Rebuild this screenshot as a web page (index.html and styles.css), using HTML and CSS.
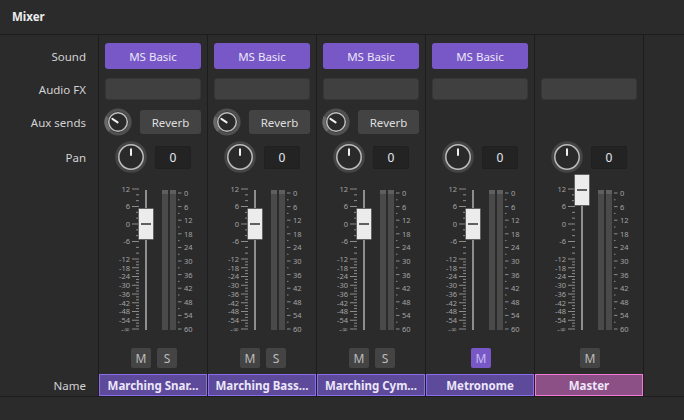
FILE: index.html
```html
<!DOCTYPE html>
<html>
<head>
<meta charset="utf-8">
<link rel="stylesheet" href="styles.css">
</head>
<body>
<div class="app">
  <header class="titlebar">Mixer</header>
  <div class="mixer">
    <div class="col labels">
      <div class="row r-sound">Sound</div>
      <div class="row r-fx">Audio FX</div>
      <div class="row r-aux">Aux sends</div>
      <div class="row r-pan">Pan</div>
      <div class="row r-fader"></div>
      <div class="row r-ms"></div>
      <div class="row r-name">Name</div>
    </div>

    <!-- Strip 1 -->
    <div class="col strip">
      <div class="row r-sound"><div class="btn sound">MS Basic</div></div>
      <div class="row r-fx"><div class="fxbox"></div></div>
      <div class="row r-aux">
        <svg class="knob-s" width="28" height="28" viewBox="0 0 28 28"><circle class="ring" cx="14" cy="14" r="12"/><path class="ring-val" d="M5.5 22.5A12 12 0 0 1 3.1 9"/><circle class="face" cx="14" cy="14" r="9.3"/><path class="ptr" d="M13.6 14.4L8.4 10.9"/></svg>
        <div class="btn aux">Reverb</div>
      </div>
      <div class="row r-pan">
        <svg class="knob-l" width="32" height="32" viewBox="0 0 32 32"><circle class="ring" cx="16" cy="16" r="14"/><circle class="face" cx="16" cy="16" r="12.2"/><path class="ptr" d="M16 8.2V14"/></svg>
        <div class="panval">0</div>
      </div>
      <div class="row r-fader">
        <svg class="fader" width="108" height="162" viewBox="0 0 108 162">
          <path class="tk" d="M33 15h7M33 32.5h7M33 50h7M33 67.5h7M33 85h7M33 93.75h7M33 102.5h7M33 111.25h7M33 120h7M33 128.75h7M33 137.5h7M33 146.25h7M33 155h7M37 20.83h3M37 26.67h3M37 38.33h3M37 44.17h3M37 55.83h3M37 61.67h3M37 73.33h3M37 79.17h3M37 87.92h3M37 90.83h3M37 96.67h3M37 99.58h3M37 105.42h3M37 108.33h3M37 114.17h3M37 117.08h3M37 122.92h3M37 125.83h3M37 131.67h3M37 134.58h3M37 140.42h3M37 143.33h3M37 149.17h3M37 152.08h3M79 19h3.5M79 32.6h3.5M79 46.2h3.5M79 59.8h3.5M79 73.4h3.5M79 87h3.5M79 100.6h3.5M79 114.2h3.5M79 127.8h3.5M79 141.4h3.5M79 155h3.5M79 25.8h1.5M79 39.4h1.5M79 53h1.5M79 66.6h1.5M79 80.2h1.5M79 93.8h1.5M79 107.4h1.5M79 121h1.5M79 134.6h1.5M79 148.2h1.5"/>
          <g class="lbl-l"><text x="31" y="17.9">12</text><text x="31" y="35.4">6</text><text x="31" y="52.9">0</text><text x="31" y="70.4">-6</text><text x="31" y="87.9">-12</text><text x="31" y="96.6">-18</text><text x="31" y="105.4">-24</text><text x="31" y="114.1">-30</text><text x="31" y="122.9">-36</text><text x="31" y="131.6">-42</text><text x="31" y="140.4">-48</text><text x="31" y="149.1">-54</text><text x="31" y="157.9">-∞</text></g>
          <g class="lbl-r"><text x="85" y="21.9">0</text><text x="85" y="35.5">6</text><text x="85" y="49.1">12</text><text x="85" y="62.7">18</text><text x="85" y="76.3">24</text><text x="85" y="89.9">30</text><text x="85" y="103.5">36</text><text x="85" y="117.1">42</text><text x="85" y="130.7">48</text><text x="85" y="144.3">54</text><text x="85" y="157.9">60</text></g>
          <rect class="track" x="46" y="16" width="2" height="140"/>
          <rect class="meter" x="63" y="16" width="6" height="140"/><rect class="meter-top" x="63" y="16" width="6" height="4"/>
          <rect class="meter" x="71" y="16" width="6" height="140"/><rect class="meter-top" x="71" y="16" width="6" height="4"/>
          <rect class="cap" x="39.5" y="34.5" width="15" height="31" rx="1"/><path class="cap-line" d="M42 50h10"/>
        </svg>
      </div>
      <div class="row r-ms"><div class="tog">M</div><div class="tog">S</div></div>
      <div class="row r-name"><div class="name">Marching Snar...</div></div>
    </div>

    <!-- Strip 2 -->
    <div class="col strip">
      <div class="row r-sound"><div class="btn sound">MS Basic</div></div>
      <div class="row r-fx"><div class="fxbox"></div></div>
      <div class="row r-aux">
        <svg class="knob-s" width="28" height="28" viewBox="0 0 28 28"><circle class="ring" cx="14" cy="14" r="12"/><path class="ring-val" d="M5.5 22.5A12 12 0 0 1 3.1 9"/><circle class="face" cx="14" cy="14" r="9.3"/><path class="ptr" d="M13.6 14.4L8.4 10.9"/></svg>
        <div class="btn aux">Reverb</div>
      </div>
      <div class="row r-pan">
        <svg class="knob-l" width="32" height="32" viewBox="0 0 32 32"><circle class="ring" cx="16" cy="16" r="14"/><circle class="face" cx="16" cy="16" r="12.2"/><path class="ptr" d="M16 8.2V14"/></svg>
        <div class="panval">0</div>
      </div>
      <div class="row r-fader">
        <svg class="fader" width="108" height="162" viewBox="0 0 108 162">
          <path class="tk" d="M33 15h7M33 32.5h7M33 50h7M33 67.5h7M33 85h7M33 93.75h7M33 102.5h7M33 111.25h7M33 120h7M33 128.75h7M33 137.5h7M33 146.25h7M33 155h7M37 20.83h3M37 26.67h3M37 38.33h3M37 44.17h3M37 55.83h3M37 61.67h3M37 73.33h3M37 79.17h3M37 87.92h3M37 90.83h3M37 96.67h3M37 99.58h3M37 105.42h3M37 108.33h3M37 114.17h3M37 117.08h3M37 122.92h3M37 125.83h3M37 131.67h3M37 134.58h3M37 140.42h3M37 143.33h3M37 149.17h3M37 152.08h3M79 19h3.5M79 32.6h3.5M79 46.2h3.5M79 59.8h3.5M79 73.4h3.5M79 87h3.5M79 100.6h3.5M79 114.2h3.5M79 127.8h3.5M79 141.4h3.5M79 155h3.5M79 25.8h1.5M79 39.4h1.5M79 53h1.5M79 66.6h1.5M79 80.2h1.5M79 93.8h1.5M79 107.4h1.5M79 121h1.5M79 134.6h1.5M79 148.2h1.5"/>
          <g class="lbl-l"><text x="31" y="17.9">12</text><text x="31" y="35.4">6</text><text x="31" y="52.9">0</text><text x="31" y="70.4">-6</text><text x="31" y="87.9">-12</text><text x="31" y="96.6">-18</text><text x="31" y="105.4">-24</text><text x="31" y="114.1">-30</text><text x="31" y="122.9">-36</text><text x="31" y="131.6">-42</text><text x="31" y="140.4">-48</text><text x="31" y="149.1">-54</text><text x="31" y="157.9">-∞</text></g>
          <g class="lbl-r"><text x="85" y="21.9">0</text><text x="85" y="35.5">6</text><text x="85" y="49.1">12</text><text x="85" y="62.7">18</text><text x="85" y="76.3">24</text><text x="85" y="89.9">30</text><text x="85" y="103.5">36</text><text x="85" y="117.1">42</text><text x="85" y="130.7">48</text><text x="85" y="144.3">54</text><text x="85" y="157.9">60</text></g>
          <rect class="track" x="46" y="16" width="2" height="140"/>
          <rect class="meter" x="63" y="16" width="6" height="140"/><rect class="meter-top" x="63" y="16" width="6" height="4"/>
          <rect class="meter" x="71" y="16" width="6" height="140"/><rect class="meter-top" x="71" y="16" width="6" height="4"/>
          <rect class="cap" x="39.5" y="34.5" width="15" height="31" rx="1"/><path class="cap-line" d="M42 50h10"/>
        </svg>
      </div>
      <div class="row r-ms"><div class="tog">M</div><div class="tog">S</div></div>
      <div class="row r-name"><div class="name">Marching Bass...</div></div>
    </div>

    <!-- Strip 3 -->
    <div class="col strip">
      <div class="row r-sound"><div class="btn sound">MS Basic</div></div>
      <div class="row r-fx"><div class="fxbox"></div></div>
      <div class="row r-aux">
        <svg class="knob-s" width="28" height="28" viewBox="0 0 28 28"><circle class="ring" cx="14" cy="14" r="12"/><path class="ring-val" d="M5.5 22.5A12 12 0 0 1 3.1 9"/><circle class="face" cx="14" cy="14" r="9.3"/><path class="ptr" d="M13.6 14.4L8.4 10.9"/></svg>
        <div class="btn aux">Reverb</div>
      </div>
      <div class="row r-pan">
        <svg class="knob-l" width="32" height="32" viewBox="0 0 32 32"><circle class="ring" cx="16" cy="16" r="14"/><circle class="face" cx="16" cy="16" r="12.2"/><path class="ptr" d="M16 8.2V14"/></svg>
        <div class="panval">0</div>
      </div>
      <div class="row r-fader">
        <svg class="fader" width="108" height="162" viewBox="0 0 108 162">
          <path class="tk" d="M33 15h7M33 32.5h7M33 50h7M33 67.5h7M33 85h7M33 93.75h7M33 102.5h7M33 111.25h7M33 120h7M33 128.75h7M33 137.5h7M33 146.25h7M33 155h7M37 20.83h3M37 26.67h3M37 38.33h3M37 44.17h3M37 55.83h3M37 61.67h3M37 73.33h3M37 79.17h3M37 87.92h3M37 90.83h3M37 96.67h3M37 99.58h3M37 105.42h3M37 108.33h3M37 114.17h3M37 117.08h3M37 122.92h3M37 125.83h3M37 131.67h3M37 134.58h3M37 140.42h3M37 143.33h3M37 149.17h3M37 152.08h3M79 19h3.5M79 32.6h3.5M79 46.2h3.5M79 59.8h3.5M79 73.4h3.5M79 87h3.5M79 100.6h3.5M79 114.2h3.5M79 127.8h3.5M79 141.4h3.5M79 155h3.5M79 25.8h1.5M79 39.4h1.5M79 53h1.5M79 66.6h1.5M79 80.2h1.5M79 93.8h1.5M79 107.4h1.5M79 121h1.5M79 134.6h1.5M79 148.2h1.5"/>
          <g class="lbl-l"><text x="31" y="17.9">12</text><text x="31" y="35.4">6</text><text x="31" y="52.9">0</text><text x="31" y="70.4">-6</text><text x="31" y="87.9">-12</text><text x="31" y="96.6">-18</text><text x="31" y="105.4">-24</text><text x="31" y="114.1">-30</text><text x="31" y="122.9">-36</text><text x="31" y="131.6">-42</text><text x="31" y="140.4">-48</text><text x="31" y="149.1">-54</text><text x="31" y="157.9">-∞</text></g>
          <g class="lbl-r"><text x="85" y="21.9">0</text><text x="85" y="35.5">6</text><text x="85" y="49.1">12</text><text x="85" y="62.7">18</text><text x="85" y="76.3">24</text><text x="85" y="89.9">30</text><text x="85" y="103.5">36</text><text x="85" y="117.1">42</text><text x="85" y="130.7">48</text><text x="85" y="144.3">54</text><text x="85" y="157.9">60</text></g>
          <rect class="track" x="46" y="16" width="2" height="140"/>
          <rect class="meter" x="63" y="16" width="6" height="140"/><rect class="meter-top" x="63" y="16" width="6" height="4"/>
          <rect class="meter" x="71" y="16" width="6" height="140"/><rect class="meter-top" x="71" y="16" width="6" height="4"/>
          <rect class="cap" x="39.5" y="34.5" width="15" height="31" rx="1"/><path class="cap-line" d="M42 50h10"/>
        </svg>
      </div>
      <div class="row r-ms"><div class="tog">M</div><div class="tog">S</div></div>
      <div class="row r-name"><div class="name">Marching Cym...</div></div>
    </div>

    <!-- Strip 4: Metronome -->
    <div class="col strip">
      <div class="row r-sound"><div class="btn sound">MS Basic</div></div>
      <div class="row r-fx"><div class="fxbox"></div></div>
      <div class="row r-aux"></div>
      <div class="row r-pan">
        <svg class="knob-l" width="32" height="32" viewBox="0 0 32 32"><circle class="ring" cx="16" cy="16" r="14"/><circle class="face" cx="16" cy="16" r="12.2"/><path class="ptr" d="M16 8.2V14"/></svg>
        <div class="panval">0</div>
      </div>
      <div class="row r-fader">
        <svg class="fader" width="108" height="162" viewBox="0 0 108 162">
          <path class="tk" d="M33 15h7M33 32.5h7M33 50h7M33 67.5h7M33 85h7M33 93.75h7M33 102.5h7M33 111.25h7M33 120h7M33 128.75h7M33 137.5h7M33 146.25h7M33 155h7M37 20.83h3M37 26.67h3M37 38.33h3M37 44.17h3M37 55.83h3M37 61.67h3M37 73.33h3M37 79.17h3M37 87.92h3M37 90.83h3M37 96.67h3M37 99.58h3M37 105.42h3M37 108.33h3M37 114.17h3M37 117.08h3M37 122.92h3M37 125.83h3M37 131.67h3M37 134.58h3M37 140.42h3M37 143.33h3M37 149.17h3M37 152.08h3M79 19h3.5M79 32.6h3.5M79 46.2h3.5M79 59.8h3.5M79 73.4h3.5M79 87h3.5M79 100.6h3.5M79 114.2h3.5M79 127.8h3.5M79 141.4h3.5M79 155h3.5M79 25.8h1.5M79 39.4h1.5M79 53h1.5M79 66.6h1.5M79 80.2h1.5M79 93.8h1.5M79 107.4h1.5M79 121h1.5M79 134.6h1.5M79 148.2h1.5"/>
          <g class="lbl-l"><text x="31" y="17.9">12</text><text x="31" y="35.4">6</text><text x="31" y="52.9">0</text><text x="31" y="70.4">-6</text><text x="31" y="87.9">-12</text><text x="31" y="96.6">-18</text><text x="31" y="105.4">-24</text><text x="31" y="114.1">-30</text><text x="31" y="122.9">-36</text><text x="31" y="131.6">-42</text><text x="31" y="140.4">-48</text><text x="31" y="149.1">-54</text><text x="31" y="157.9">-∞</text></g>
          <g class="lbl-r"><text x="85" y="21.9">0</text><text x="85" y="35.5">6</text><text x="85" y="49.1">12</text><text x="85" y="62.7">18</text><text x="85" y="76.3">24</text><text x="85" y="89.9">30</text><text x="85" y="103.5">36</text><text x="85" y="117.1">42</text><text x="85" y="130.7">48</text><text x="85" y="144.3">54</text><text x="85" y="157.9">60</text></g>
          <rect class="track" x="46" y="16" width="2" height="140"/>
          <rect class="meter" x="63" y="16" width="6" height="140"/><rect class="meter-top" x="63" y="16" width="6" height="4"/>
          <rect class="meter" x="71" y="16" width="6" height="140"/><rect class="meter-top" x="71" y="16" width="6" height="4"/>
          <rect class="cap" x="39.5" y="34.5" width="15" height="31" rx="1"/><path class="cap-line" d="M42 50h10"/>
        </svg>
      </div>
      <div class="row r-ms"><div class="tog on">M</div></div>
      <div class="row r-name"><div class="name">Metronome</div></div>
    </div>

    <!-- Strip 5: Master -->
    <div class="col strip">
      <div class="row r-sound"></div>
      <div class="row r-fx"><div class="fxbox"></div></div>
      <div class="row r-aux"></div>
      <div class="row r-pan">
        <svg class="knob-l" width="32" height="32" viewBox="0 0 32 32"><circle class="ring" cx="16" cy="16" r="14"/><circle class="face" cx="16" cy="16" r="12.2"/><path class="ptr" d="M16 8.2V14"/></svg>
        <div class="panval">0</div>
      </div>
      <div class="row r-fader">
        <svg class="fader" width="108" height="162" viewBox="0 0 108 162">
          <path class="tk" d="M33 15h7M33 32.5h7M33 50h7M33 67.5h7M33 85h7M33 93.75h7M33 102.5h7M33 111.25h7M33 120h7M33 128.75h7M33 137.5h7M33 146.25h7M33 155h7M37 20.83h3M37 26.67h3M37 38.33h3M37 44.17h3M37 55.83h3M37 61.67h3M37 73.33h3M37 79.17h3M37 87.92h3M37 90.83h3M37 96.67h3M37 99.58h3M37 105.42h3M37 108.33h3M37 114.17h3M37 117.08h3M37 122.92h3M37 125.83h3M37 131.67h3M37 134.58h3M37 140.42h3M37 143.33h3M37 149.17h3M37 152.08h3M79 19h3.5M79 32.6h3.5M79 46.2h3.5M79 59.8h3.5M79 73.4h3.5M79 87h3.5M79 100.6h3.5M79 114.2h3.5M79 127.8h3.5M79 141.4h3.5M79 155h3.5M79 25.8h1.5M79 39.4h1.5M79 53h1.5M79 66.6h1.5M79 80.2h1.5M79 93.8h1.5M79 107.4h1.5M79 121h1.5M79 134.6h1.5M79 148.2h1.5"/>
          <g class="lbl-l"><text x="31" y="17.9">12</text><text x="31" y="35.4">6</text><text x="31" y="52.9">0</text><text x="31" y="70.4">-6</text><text x="31" y="87.9">-12</text><text x="31" y="96.6">-18</text><text x="31" y="105.4">-24</text><text x="31" y="114.1">-30</text><text x="31" y="122.9">-36</text><text x="31" y="131.6">-42</text><text x="31" y="140.4">-48</text><text x="31" y="149.1">-54</text><text x="31" y="157.9">-∞</text></g>
          <g class="lbl-r"><text x="85" y="21.9">0</text><text x="85" y="35.5">6</text><text x="85" y="49.1">12</text><text x="85" y="62.7">18</text><text x="85" y="76.3">24</text><text x="85" y="89.9">30</text><text x="85" y="103.5">36</text><text x="85" y="117.1">42</text><text x="85" y="130.7">48</text><text x="85" y="144.3">54</text><text x="85" y="157.9">60</text></g>
          <rect class="track" x="46" y="16" width="2" height="140"/>
          <rect class="meter" x="63" y="16" width="6" height="140"/><rect class="meter-top" x="63" y="16" width="6" height="4"/>
          <rect class="meter" x="71" y="16" width="6" height="140"/><rect class="meter-top" x="71" y="16" width="6" height="4"/>
          <rect class="cap" x="39.5" y="0.5" width="15" height="31" rx="1"/><path class="cap-line" d="M42 16h10"/>
        </svg>
      </div>
      <div class="row r-ms"><div class="tog">M</div></div>
      <div class="row r-name"><div class="name master">Master</div></div>
    </div>

    <div class="rest"></div>
  </div>
</div>
</body>
</html>
```
FILE: styles.css
```css
html, body {
  margin: 0;
  padding: 0;
}
body {
  width: 684px;
  height: 420px;
  overflow: hidden;
  background: #2b2b2c;
  font-family: "Noto Sans", "Open Sans", sans-serif;
  font-size: 11.5px;
  color: #d2d2d2;
}
.titlebar {
  box-sizing: border-box;
  border-bottom: 1px solid #1d1d1e;
  height: 35px;
  display: flex;
  align-items: center;
  padding-left: 12px;
  padding-bottom: 1px;
  font-weight: 700;
  color: #ececec;
}
.mixer {
  display: flex;
  height: 361px;
  border-bottom: 1px solid #1d1d1e;
}
.col {
  display: flex;
  flex-direction: column;
  flex: none;
  border-right: 1px solid #1d1d1e;
}
.labels { width: 98px; }
.strip { width: 108px; }
.rest { flex: 1; }
.row {
  flex: none;
  display: flex;
  align-items: center;
}
.labels .row {
  justify-content: flex-end;
  padding-right: 12px;
}
.r-sound { margin-top: 8px; height: 26px; }
.r-fx { margin-top: 9px; height: 22px; }
.r-aux { margin-top: 8px; height: 28px; }
.r-pan { margin-top: 5px; height: 32px; }
.r-fader { margin-top: 1px; height: 162px; }
.r-ms { margin-top: 12px; height: 20px; }
.r-name { margin-top: 6px; height: 22px; }

.strip .r-sound, .strip .r-fx { padding-left: 6px; }
.strip .r-aux { padding-left: 5px; gap: 8px; }
.strip .r-pan { padding-left: 16px; gap: 8px; }
.strip .r-ms { justify-content: center; gap: 6px; padding-left: 2px; }

.btn {
  display: flex;
  align-items: center;
  justify-content: center;
  border-radius: 3px;
  box-sizing: border-box;
}
.sound {
  width: 96px;
  height: 26px;
  background: #7858c6;
  color: #ebe5fb;
}
.fxbox {
  width: 96px;
  height: 22px;
  box-sizing: border-box;
  background: #404041;
  border: 1px solid #363637;
  border-radius: 3px;
}
.aux {
  width: 61px;
  height: 24px;
  background: #434344;
  color: #dedede;
}
.knob-s, .knob-l { flex: none; display: block; }
.ring { fill: none; stroke: #505051; stroke-width: 3.2; }
.knob-l .ring { stroke: #454546; stroke-width: 3.6; }
.ring-val { fill: none; stroke: #6a6a6b; stroke-width: 3.2; }
.face { fill: #2a2a2b; stroke: #bdbdbd; stroke-width: 1.5; }
.ptr { stroke: #f0f0f0; stroke-width: 2; stroke-linecap: round; fill: none; }

.panval {
  width: 36px;
  height: 23px;
  box-sizing: border-box;
  background: #232324;
  border: 1px solid #202021;
  border-radius: 2px;
  display: flex;
  align-items: center;
  justify-content: center;
  color: #e3e7f2;
  font-size: 12px;
}

.fader { display: block; }
.tk { stroke: #8c8c8c; stroke-width: 1; fill: none; }
.lbl-l text, .lbl-r text {
  font-family: "Noto Sans", "DejaVu Sans", sans-serif;
  font-size: 7.5px;
  fill: #a3a3a3;
}
.lbl-l text { text-anchor: end; }
.track { fill: #8e8e8e; }
.meter { fill: #4a4a4b; }
.meter-top { fill: #5f5f60; }
.cap { fill: #ececec; stroke: #626262; stroke-width: 1; }
.cap-line { stroke: #151515; stroke-width: 1.3; fill: none; }

.tog {
  width: 20px;
  height: 20px;
  border-radius: 2px;
  background: #444445;
  color: #bcbcbc;
  display: flex;
  align-items: center;
  justify-content: center;
  font-size: 12px;
}
.tog.on {
  background: #7858c6;
  color: #c9bbf2;
}
.name {
  width: 108px;
  height: 22px;
  box-sizing: border-box;
  border: 1px solid #8b6deb;
  background: #5d4a9b;
  color: #ece6f8;
  font-weight: 700;
  display: flex;
  align-items: center;
  justify-content: center;
  white-space: nowrap;
  overflow: hidden;
}
.name.master {
  border-color: #f07ad6;
  background: #8d5086;
}
```
